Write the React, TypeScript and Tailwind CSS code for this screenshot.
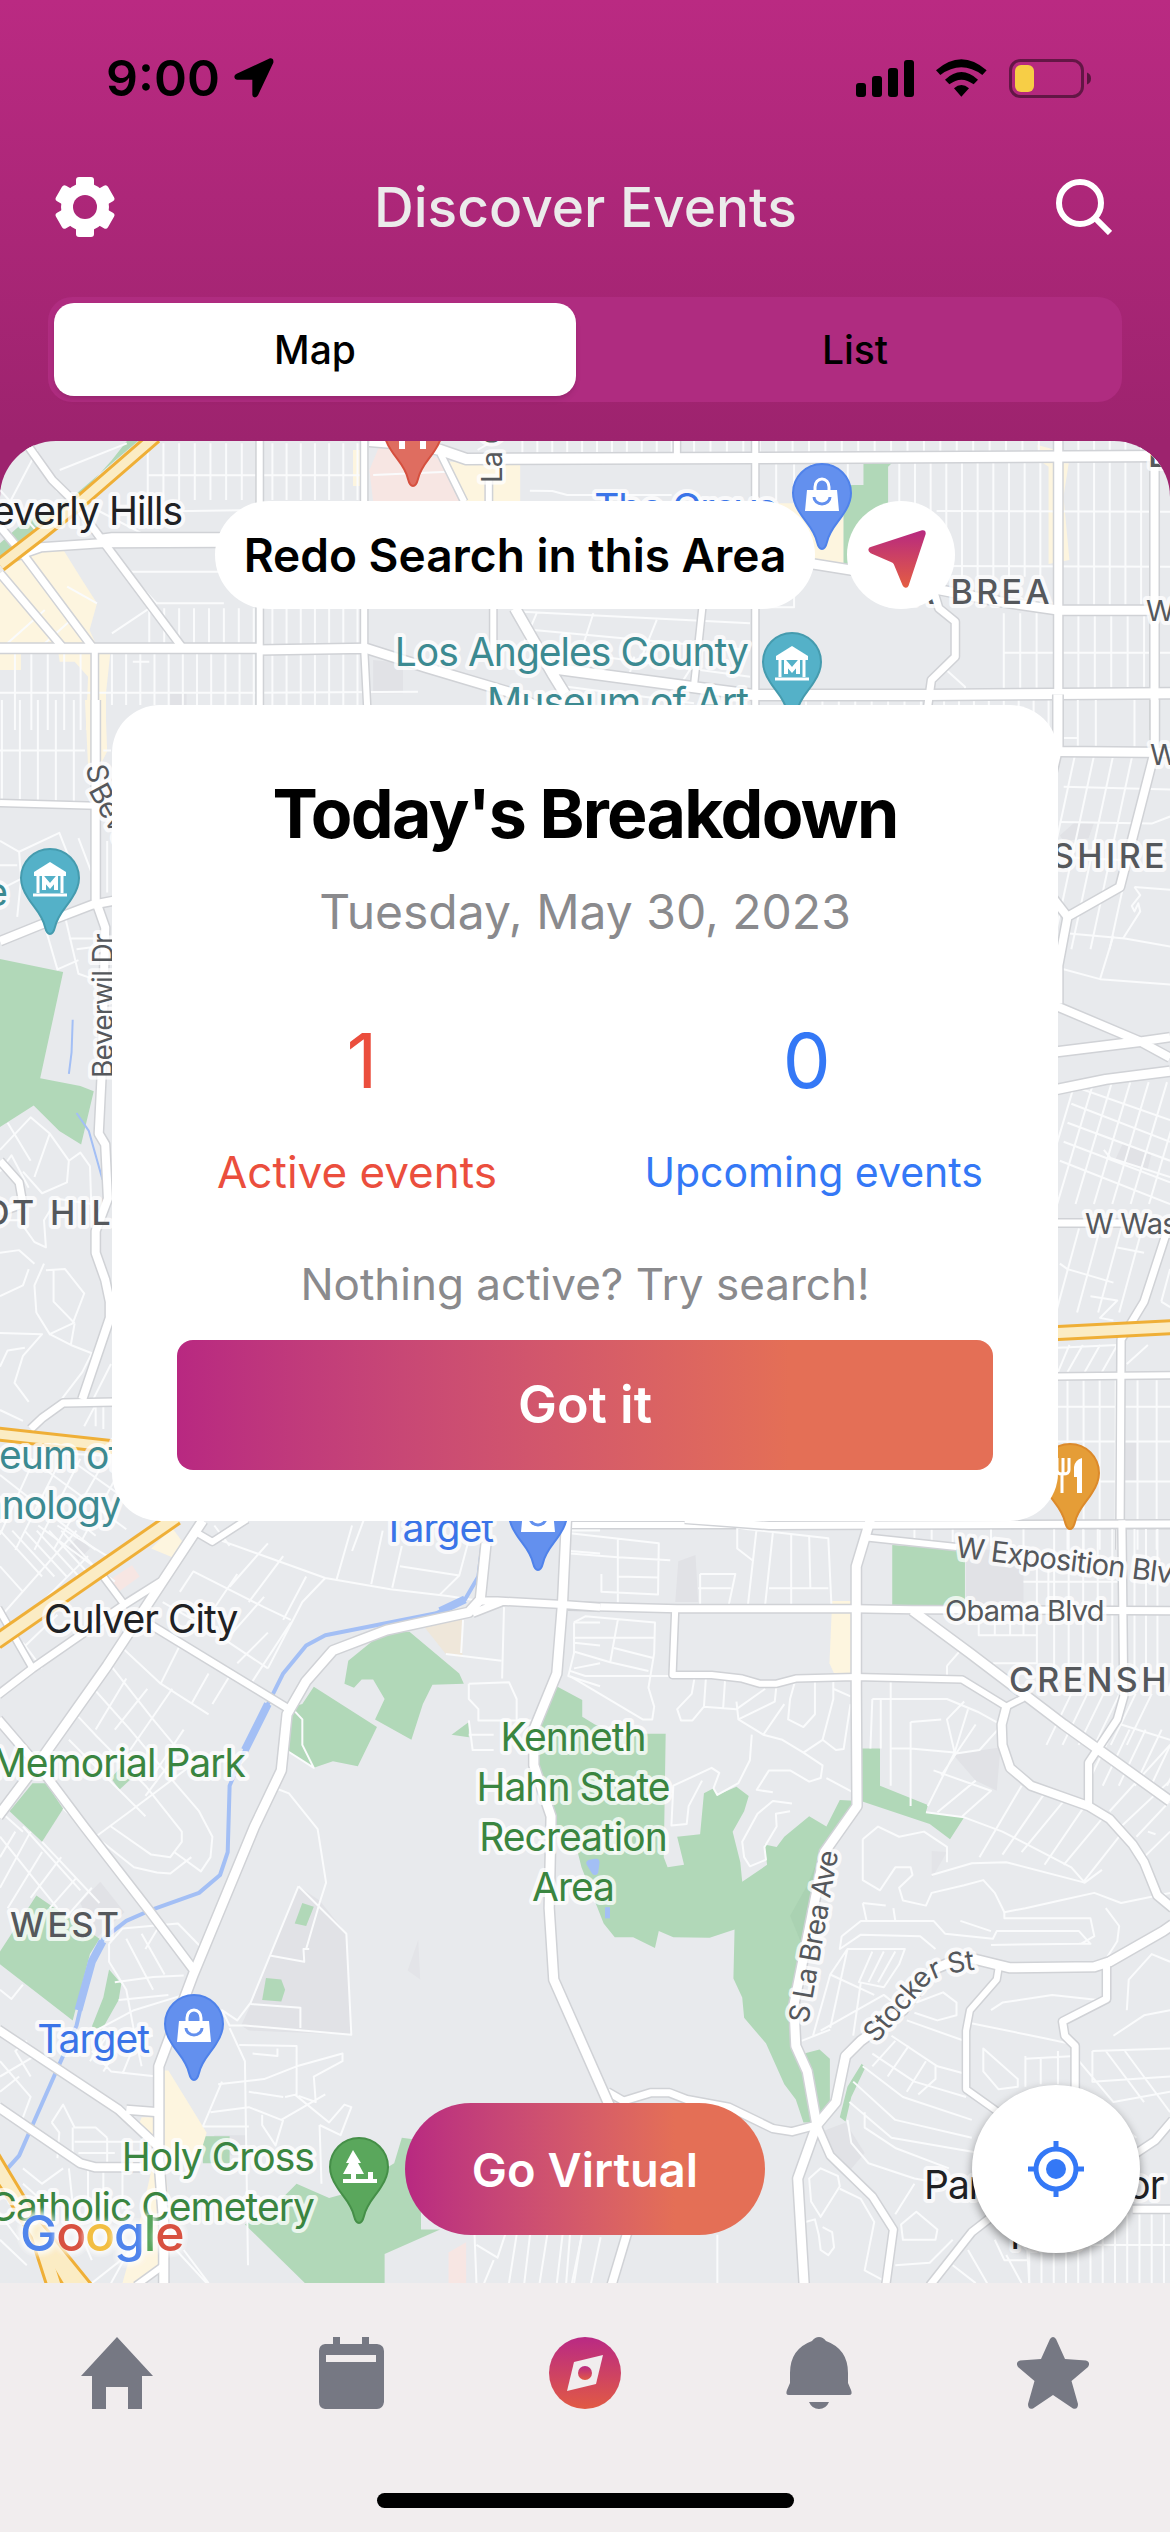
import React, { useState } from "react";

type Road = { d: string; w: number };

/* One section of the city map, drawn in its own survey grid. */
type Sheet = {
  place: string;
  areas: [string, string][];
  water?: Road[];
  minor: string[];
  roads: Road[];
  highways?: Road[];
};

const vLines = (x0: number, x1: number, step: number, y0: number, y1: number) => {
  let d = "";
  for (let x = x0; x <= x1; x += step) d += `M${x} ${y0}V${y1}`;
  return d;
};

const slanted = (x0: number, x1: number, step: number, y0: number, y1: number, dx: number) => {
  let d = "";
  for (let x = x0; x <= x1; x += step) d += `M${x} ${y0}L${x + dx} ${y1}`;
  return d;
};

const GREEN = "#b1d8b8";
const SAND = "#fdf5df";
const ROSE = "#f7e6e3";
const GREY = "#e1e2e6";

const north: Sheet = {
  place: "translate(0 430) scale(0.7463 0.3333)",
  areas: [
    [GREEN, "M185 33L95 205L60 280L0 390V340L30 280L110 190L150 90L170 33Z"],
    [GREEN, "M1157 95H1197L1190 110V240L1130 420V165H1157Z"],
    [SAND, "M0 430L40 360L85 360L110 450L130 520L120 600L130 650L60 655L0 640Z"],
    [SAND, "M0 665H28V720H0Z"],
    [SAND, "M78 665H148L142 790L142 900H115L118 740L100 695H80Z"],
    [ROSE, "M508 50L600 90L622 215H500L495 120Z"],
    [SAND, "M600 95H697V215H625Z"],
    [SAND, "M473 60H486V168H473Z"],
    [SAND, "M1040 220L1130 220V405L1090 395Z"],
    [SAND, "M1390 45L1415 60V100L1432 100L1425 200L1433 390L1405 402L1405 110L1392 90Z"],
    [GREY, "M500 690L540 700V790H500Z"],
    [GREY, "M228 790H250V825H228Z"],
  ],
  minor: [
    vLines(198, 345, 21, 40, 210),
    vLines(365, 480, 19, 40, 210),
    vLines(200, 345, 20, 535, 650),
    vLines(365, 480, 19, 535, 650),
    vLines(20, 120, 22, 665, 900),
    vLines(150, 345, 19, 670, 825),
    vLines(365, 480, 19, 665, 825),
    vLines(700, 900, 20, 33, 75),
    vLines(930, 1410, 22, 33, 72),
    vLines(1040, 1150, 24, 85, 210),
    vLines(1205, 1410, 21, 90, 440),
    vLines(1445, 1540, 21, 33, 530),
    vLines(1345, 1410, 22, 550, 780),
    vLines(1445, 1540, 22, 550, 785),
    vLines(1080, 1240, 22, 800, 830),
    vLines(1265, 1410, 20, 800, 900),
    "M198 136H486M190 245L345 240M175 425H300M205 520H300M500 135L600 125M710 182L740 183L760 195H900",
    "M1255 243L1568 245M1255 408L1568 410M1345 668H1568M0 788H345L560 785M178 695H200",
    "M0 180L60 330M50 60L10 230M80 120L170 40M75 180L125 260M130 240L190 310M160 400L210 520L150 610M90 470L130 520M20 470L75 640M60 540L10 640M100 560L50 660",
    "M640 60L655 40M700 545L1005 580M715 600L1005 660M740 660L1005 740M700 650L720 545M780 655L795 550M860 680L880 570M840 760L850 680M910 770L930 700M760 770L750 830M760 770L930 820",
    "M1268 720L1293 770V785M1064 500V532H1015",
  ],
  roads: [
    { d: "M35 40L70 150L95 205L135 325L245 655", w: 7 },
    { d: "M0 290L30 370L125 655M0 430L85 655", w: 7 },
    { d: "M0 395L55 352L135 340L300 338M135 326L150 322H300", w: 8 },
    { d: "M0 655H345M345 660L490 655L570 712L680 785L720 830", w: 9 },
    { d: "M348 33V830M488 33V655L492 830M127 655V900", w: 6 },
    { d: "M495 33L560 45L590 60L625 87L1010 84L1568 78", w: 10 },
    { d: "M590 70L622 215M655 150V215M661 535V660", w: 6 },
    { d: "M690 535L740 730L757 792M740 715L940 775L1010 795H1240L1568 790", w: 10 },
    { d: "M907 33V83M1012 33V830M941 535L930 765", w: 6 },
    { d: "M1090 402L1140 420L1260 480L1340 515L1420 541H1540", w: 9 },
    { d: "M1252 490L1258 535L1280 575V680L1248 750L1243 830", w: 7 },
    { d: "M1418 33V900", w: 8 },
    { d: "M1547 33V900", w: 8 },
  ],
  highways: [{ d: "M208 20L105 220L55 310L0 405", w: 15 }],
};

const west: Sheet = {
  place: "translate(0 700) scale(0.3827 0.542)",
  areas: [
    [SAND, "M222 0H275L280 95L262 120H230Z"],
    [GREEN, "M0 478L165 502L105 698L210 712L245 722L212 820L155 795L88 748L0 788Z"],
  ],
  water: [{ d: "M190 590L187 650L180 690M200 762L232 795L268 885", w: 2 }],
  minor: [
    vLines(5, 200, 47, 0, 190),
    "M0 93H222M290 93H270M0 260L50 280L155 245L180 290V340M50 280L55 330L0 350M55 330L45 400M0 305H45M280 260V355M205 255L240 320",
    "M110 400L150 497L205 480M170 400L205 505L245 515M180 440H250M175 400L235 375M200 460L255 455",
    "M0 830L80 770L130 800L180 850L175 890L110 910L60 870M0 870L30 840L75 900M20 780L80 850M130 800L90 880M180 850L210 835L235 860L240 960",
    "M0 960L50 960L90 1000L120 1010L115 960L150 920L240 930M115 1040L90 1080L95 1130L130 1170L190 1150L220 1095L170 1050L120 1052M140 1050V1110L195 1150",
    "M0 1020L50 1015L90 1040M0 1100L60 1080L75 1050M0 1168L110 1170L60 1210L38 1260L75 1295M0 1230L20 1200L65 1195M150 1300L215 1240L240 1205M185 1190L250 1208M195 1150L185 1190L130 1170",
    "M240 1295L290 1225M220 1340L250 1300V1340M270 1300V1345M0 1310L60 1330M100 1355L170 1390L290 1395",
    "M0 1540L90 1400M40 1568L160 1400M90 1568L210 1400M140 1568L260 1420M200 1568L330 1400M0 1430L250 1568M80 1400L330 1530M180 1400L340 1480",
  ],
  roads: [
    { d: "M0 190L250 195", w: 6 },
    { d: "M250 0V370L275 420L265 700L258 800L275 820L282 920L250 980V1020L275 1070L287 1110V1140L215 1290", w: 8 },
    { d: "M0 445L140 405L240 378L300 370", w: 8 },
    { d: "M0 850L50 890L60 930L0 945", w: 7 },
    { d: "M300 1295L165 1297L110 1325L80 1345", w: 7 },
  ],
  highways: [{ d: "M-10 1354L300 1378", w: 15 }],
};

const east: Sheet = {
  place: "translate(570 700) scale(0.3827 0.542)",
  areas: [
    [GREY, "M1280 250L1320 225H1370L1355 255L1290 260Z"],
    [GREY, "M1445 818L1520 835L1510 865L1425 848Z"],
    [GREY, "M1445 1370H1480V1440H1445Z"],
  ],
  minor: [
    "M1327 0V90M1374 0V90M1475 0V90M1285 70H1327",
    slanted(1320, 1560, 50, 100, 460, -110),
    "M1290 160L1568 165M1280 225L1520 228L1568 215M1290 430L1450 440L1568 455M1280 495L1385 515L1568 525M1475 345L1568 350M1290 290L1440 295",
    "M1475 345L1490 360L1468 380L1475 390L1485 375L1490 390L1445 440M1385 515L1420 435",
    slanted(1320, 1620, 48, 705, 930, -95),
    "M1325 715L1568 775M1310 745L1568 815M1300 780L1568 850M1290 815L1568 890M1280 850L1568 930M1395 830L1412 845L1568 880",
    slanted(1330, 1600, 55, 975, 1130, -60),
    "M1280 1040L1300 1050L1420 1075M1360 1100L1430 1108L1385 1140L1420 1145M1430 1010L1500 1020M1545 1110L1568 1050M1545 1110L1568 1120",
    "M1275 1240L1305 1190M1300 1240L1340 1190M1345 1240L1385 1190M1390 1240L1430 1190M1455 1225L1510 1190M1275 1195L1430 1190",
    vLines(1300, 1430, 42, 1255, 1568),
    vLines(1483, 1560, 50, 1255, 1568),
    "M1270 1304H1437M1270 1368H1568M1270 1442H1568M1437 1304H1568",
  ],
  roads: [
    { d: "M1275 -10V95L1568 97", w: 9 },
    { d: "M1275 95L1240 200", w: 7 },
    { d: "M1528 0V95L1437 345L1300 400L1276 490V560", w: 8 },
    { d: "M1262 365L1300 400", w: 8 },
    { d: "M1262 562L1490 630L1568 622M1490 630L1568 660", w: 8 },
    { d: "M1262 650L1490 630M1262 720L1400 700L1568 685", w: 9 },
    { d: "M1262 965H1568", w: 7 },
    { d: "M1560 980L1500 1110L1470 1145L1440 1180L1437 1568", w: 7 },
    { d: "M1262 1248L1568 1246", w: 6 },
    { d: "M0 1522H1568", w: 6 },
  ],
  highways: [{ d: "M1250 1169L1580 1157", w: 16 }],
};

const southWest: Sheet = {
  place: "translate(0 1500) scale(0.3827 0.5102)",
  areas: [
    [GREY, "M780 757L835 785L905 850L918 1048L650 1040L630 1030L655 990Z"],
    [GREY, "M180 90L205 72L235 95L205 118Z"],
    [GREY, "M210 790L262 748L325 808L250 860Z"],
    [GREY, "M560 1245H645V1285H560Z"],
    ["#e3e4e8", "M1093 862L1098 940L1065 922Z"],
    [GREEN, "M910 315L1000 260L1070 258L1200 340L1212 360L1130 362L1105 400L1075 470L980 430L1005 390L975 352L945 352L925 368L900 360Z"],
    [GREEN, "M820 366L985 445L935 522L870 512L820 525L747 490L750 430L765 405L790 400Z"],
    [GREEN, "M1180 460L1225 435V465Z"],
    [GREEN, "M85 555H120L165 605L110 670L25 610Z"],
    [GREEN, "M290 545L320 520L345 545L312 568Z"],
    [GREEN, "M0 885L95 775L260 860L235 890L190 1020L0 910Z"],
    [GREEN, "M285 920L317 948L310 980L265 1040L240 1032L270 975Z"],
    [GREEN, "M790 790L820 797L800 835L770 830Z"],
    [GREEN, "M695 937L735 940L745 960L735 983L685 980Z"],
    [GREEN, "M530 1247H600V1300H530Z"],
    [GREEN, "M640 1420L715 1385L775 1340L860 1368L900 1360L1030 1300L1050 1250L1100 1255V1430H1150L1005 1478V1535H797Z"],
    [SAND, "M425 1118H440L540 1240L520 1290L430 1300L445 1400L410 1460L420 1500L350 1535H320L370 1400L410 1265L355 1240L370 1210H410Z"],
    [SAND, "M395 95L450 55L485 90L450 112Z"],
    [ROSE, "M290 155L345 128L365 150L310 180Z"],
    ["#efe7da", "M1110 250L1208 232V308L1165 302Z"],
    [ROSE, "M1172 1475L1218 1455V1535H1172Z"],
  ],
  water: [
    { d: "M1260 90L1250 150L1215 195L1140 222L850 265L800 285L740 340L700 400L640 490L600 560L595 690L575 735L520 770L390 805L330 825L270 860L240 900L200 1030L85 1225L50 1285L20 1310", w: 4 },
    { d: "M1215 195L1150 218M700 400L640 490M268 865L240 905L205 1000", w: 8 },
  ],
  minor: [
    slanted(0, 190, 32, 60, 150, 110),
    "M0 230L200 60M30 260L230 110M60 290L150 225M100 50L300 160M150 50L280 110M200 40L250 70M0 130L60 180M110 330L60 280",
    "M470 180L505 140L690 210L760 235M425 200L540 250L700 330M530 245L620 145M590 275L690 190M660 355L760 240M580 80L850 153L1020 175L1170 188L1255 198M880 155L920 50M1025 172L1050 90M850 153L790 200L700 330M560 50L600 90M600 170L700 85M650 200L740 110M740 235L800 150M620 320L700 260",
    "M1045 130L1200 148L1235 50M950 40L920 100M970 165L1000 60M1150 185L1200 148M1165 302L1310 315M1205 300L1210 235M1312 350L1317 210",
    "M245 370L340 450L440 540L520 610L555 660L550 700L525 728L455 690M205 425L255 465L380 560L475 650V670L445 700L395 695L290 640M180 470L260 530L380 620M285 320L400 430L500 520M320 290L420 360L545 420M250 660L340 610L500 520M380 580L460 500M300 450L385 370M250 450L330 350M340 490L450 370M400 540L480 450M420 360L470 285M500 400L545 340M555 400L600 345",
    "M110 670L260 790M60 640L210 765M165 605L250 660L350 720L410 730L445 732L500 700M0 700L40 650M0 760L80 650M20 800L110 690M80 780L160 700M130 800L200 740M170 820L240 760M0 660L150 800M0 610L60 650",
    "M285 870L320 840L465 830L530 880M285 870V905L330 960L350 1040L370 1110M300 945L400 935L480 932M310 980L440 970M240 1080L290 1120L410 1130M250 1040L350 1000L480 970M330 860L400 960M370 850L430 930M420 830L380 880M235 1100L280 1050L400 1050M270 1120L320 1060M320 1125L350 1070",
    "M0 960L30 978L60 950M0 1100L80 1170L50 1230M0 1130L90 1090M0 1160L50 1130M80 1130L40 1080L70 1060",
    "M720 565L755 575L830 645L852 750L835 790L800 880M780 757L905 850L918 1048L640 1030L600 1030L580 1000L620 1020L655 985L780 757M705 893L795 905L793 880H808M655 988L785 995V1035M600 1035L640 1100L648 1500",
    "M765 410L790 430V480L820 525L747 490M1225 360L1330 357L1350 390V430M1225 360V390L1250 410V432H1390M1225 432L1235 490H1290M1225 460H1290",
    "M625 1068L775 1070V1165L745 1170M570 1145L690 1135L775 1110L895 1085V1100L820 1130L825 1180L780 1168M530 1228H650M550 1200L650 1190L735 1215L850 1165M685 1205V1225L720 1265L740 1215M770 1165L860 1220L900 1185L918 1190L890 1245L835 1225M835 1225L840 1340M580 1140L530 1228M650 1160L740 1170M725 1075V1090L660 1085",
    "M135 1220L165 1185L195 1230H250L280 1250M135 1220L155 1240L150 1290M190 1230V1290M195 1258H370M280 1250V1300M205 1280H300M60 1310L110 1340L165 1310M60 1340L150 1400M0 1400L50 1450M270 1310V1380M320 1310V1390M230 1308V1380M180 1310L190 1380M0 1450L70 1500M240 1535L400 1440L480 1390M460 1470L540 1535M480 1470L545 1535M200 1420L240 1490M290 1535L360 1440",
    "M1490 60H1568M1490 100L1568 105M1500 240H1568M1500 240V300L1485 345L1568 365M1500 280L1568 285M1500 330L1568 320",
    "M1240 1440L1245 1535M1245 1460L1300 1485L1320 1440M1265 1535L1290 1490M1330 1535L1350 1440M1370 1535L1385 1440M1410 1535L1430 1440M1455 1535L1470 1440M1500 1535L1520 1440",
  ],
  roads: [
    { d: "M530 40L420 165L280 325L115 500L-5 620", w: 9 },
    { d: "M505 60L555 82L645 38", w: 6 },
    { d: "M420 160L325 205L85 330L-5 382", w: 7 },
    { d: "M270 150L325 205M-5 212L85 330", w: 6 },
    { d: "M390 243L760 412", w: 7 },
    { d: "M-5 430L115 535L220 640L390 805L510 925", w: 8 },
    { d: "M1270 85L1255 195L1225 220L1010 255L870 295L800 355L750 420L735 530L665 640L505 930L415 1110V1290L428 1420V1535", w: 9 },
    { d: "M1255 198H1300L1470 205L1568 210M1235 222L1310 200", w: 7 },
    { d: "M1480 40L1470 200L1455 340L1395 450V520L1440 620L1435 800L1447 940L1600 1200", w: 9 },
    { d: "M-5 1038L310 1195L410 1265M330 1195L415 1200", w: 8 },
    { d: "M-5 1190L210 1300L250 1308H370", w: 8 },
    { d: "M428 1500L355 1540", w: 6 },
  ],
  highways: [
    { d: "M-10 278L460 34", w: 17 },
    { d: "M-20 1290L100 1440L145 1545", w: 18 },
    { d: "M-10 1312L90 1420L190 1545M90 1420L225 1545", w: 16 },
  ],
};

const southEast: Sheet = {
  place: "translate(570 1500) scale(0.3827 0.5102)",
  areas: [
    [GREY, "M283 120L328 108L335 200H275Z"],
    [GREY, "M1035 95L1150 100L1185 130V208H1035Z"],
    [GREY, "M1000 498L1125 485L1115 570L1060 550Z"],
    [GREY, "M650 1240L720 1220L770 1280L730 1315L690 1290Z"],
    ["#e3e4e8", "M945 688L985 690L945 742Z"],
    [SAND, "M685 198H742V340H690L678 320Z"],
    [GREEN, "M842 88L1032 98V210H842Z"],
    [GREEN, "M762 487H810V560L935 598L930 612L1030 622L993 665L940 635L760 590Z"],
    [GREEN, "M-35 365L32 392V425L65 440L120 458H250L245 700L255 720L298 715L280 660L340 655L350 575L375 565L385 578L435 562L467 580L455 610L425 650L445 710L450 748L515 715L508 675L540 680L560 660L625 620L670 640L705 588L755 590L665 690L640 800L585 1000L595 1080L630 1130L645 1220H610L590 1175L560 1145L512 1065L455 1015L450 975L427 938L430 842L365 858L270 857L232 845L222 878L165 857H117L88 830L30 720L20 690L-40 640L-50 600L-95 500L-90 440Z"],
    ["#aad2b2", "M575 815L620 755L650 700L640 800L605 870Z"],
    [GREEN, "M612 1085L652 1077L679 1095V1185L650 1215Z"],
    [GREEN, "M762 1105L772 1112L735 1170L720 1218L705 1210L725 1150Z"],
  ],
  water: [
    { d: "M52 712L68 710L65 728Z", w: 7 },
    { d: "M98 798V820", w: 5 },
  ],
  minor: [
    "M0 65L232 85L230 185L82 180V145M0 105L125 112L262 118M125 75V210M125 150L230 152M340 145H432L415 205M340 145V205M335 173H420",
    "M437 55L675 75L683 205M437 55V95L480 120M487 60L465 205M530 65L510 205M578 68V205M625 72L628 172M520 173H675",
    "M10 240L40 228L222 240L220 300L205 368L220 405L215 430L190 430L100 390L0 345M10 270H220M10 297L105 318L205 335M0 335L40 345H260M105 318L125 235M115 290L220 310",
    "M325 350L318 380L280 410L290 432H320L350 405L355 350M350 405L435 410L510 370M405 355L400 410M435 395L440 430L505 460L555 470L610 495L660 520L655 545L625 552L575 530H520L488 568L530 573M475 460L470 510L440 555L385 578L375 565L390 535L370 525L270 560L265 638L305 635L310 600L345 550",
    "M540 360L535 395L440 430M590 350L575 390L570 430L610 445L640 420V350M688 350V390L660 470L695 490L715 488L733 400M688 370L733 385M505 460L560 400M610 495L660 470M670 545L740 573",
    "M580 595L530 590L490 615L450 670L455 700L470 718L512 705L508 680L540 640L538 615L575 610",
    "M790 390H985L1065 415L1125 440M790 390L785 487M812 390V487M838 355V560M890 435V600M890 435L970 430M838 487H890L1005 495L985 430L1030 395M935 600L1005 495M970 540L1060 440M950 530L1100 570L1025 620M1000 498L1070 490L1130 440M1005 495L1040 410M960 612L1060 550M985 325L1020 295M985 325V345",
    "M930 612L1030 622L1130 650L1310 720L1345 750L1390 725M1070 700L1180 560M1130 695L1240 575M1180 690L1290 590M1240 715L1340 605M1290 715L1390 625M1340 750L1440 655",
    "M765 665L805 640L860 660L925 650L985 680V710M765 665V745L810 765L850 720H890L895 735L860 760L870 785L930 795L945 770L1030 755L1080 745L1110 770L1135 808L1190 800L1280 785L1370 770L1440 790L1568 770M945 735L1050 712L1140 710L1345 750M765 790L825 795M765 790L775 825H850L845 800",
    "M710 855L760 825L950 825L980 850L1105 860L1115 845H1330L1360 870L1330 870M1135 808V820L1360 820L1370 855L1335 870L1100 872M1020 825L1100 845M1400 800L1435 835L1430 865L1400 900M710 855L705 880L760 852L915 855L955 880",
    "M635 1050L680 930L725 880H875L860 910L820 955L755 945L790 885M725 880L680 1035M680 930L795 970M655 1040L820 970L870 1000M760 945L740 1050M820 885L780 945M850 885L805 945M605 1060L680 1038",
    "M1100 1000L1130 985L1260 970L1380 980M1045 1025L1240 1055L1320 1068M905 985L975 965L1010 985V1010L960 1020L900 1005M880 1020L1030 1060M840 1050L960 1110L1035 1125M790 1085L900 1140L1035 1170M765 1110L870 1170L1050 1215M740 1140L850 1215L1050 1250M730 1180L840 1250L1070 1280M770 1200V1230L850 1270L990 1310M725 1215L735 1260L780 1300L900 1330L1050 1350",
    "M850 1400L900 1340M790 1110L850 1060M830 1130L885 1070M880 1160L930 1100M955 1110V1135L910 1165M1080 1075L1170 1135V1150L1120 1155L1080 1120ZM1190 1090V1150M1230 1095V1145M1190 1095L1320 1090M1275 1080V1145",
    "M625 1330L655 1310L700 1325L705 1345L655 1405L630 1375ZM615 1415L640 1410L650 1440L655 1470L675 1480L690 1465L685 1435L660 1425M705 1350L760 1370L795 1415L770 1510L820 1530M865 1420L905 1395L960 1430L955 1450L870 1450ZM850 1500L940 1495L1000 1450",
    "M1220 240V320H1105M1068 225V265H1220M1110 225V265M1150 225V265M1185 225V265M1220 120V210",
    vLines(1265, 1430, 38, 50, 330),
    vLines(1475, 1560, 30, 50, 350),
    "M900 50V75M945 52V80M1000 52V88M1100 50V90M1185 55V125H1440M1250 125V210M1185 160H1440",
    slanted(1310, 1560, 42, 380, 480, -65),
    slanted(1420, 1650, 42, 450, 560, -70),
    "M1410 610L1568 480M1440 640L1568 550M1440 440L1568 470M1480 660L1568 590M1500 700L1568 650M1510 650L1530 655",
    "M1455 1000L1460 940L1520 890L1568 905M1420 1050L1500 1010L1568 1000M1365 1080L1568 1075M1365 1080V1140L1568 1130M1330 1100L1420 1180L1568 1160M1400 1080L1500 1180M1450 1080L1568 1200M1340 1170L1480 1250",
    vLines(1200, 1560, 32, 1400, 1535),
    "M1150 1440L1195 1470L1200 1535M1140 1480L1180 1535M1000 1500L1060 1535M1110 1450L1135 1490H1200M1040 1470L1090 1535M1205 1460H1568",
    "M0 1440L-10 1535M30 1445L5 1535M80 1445L55 1535M385 1440V1535",
  ],
  roads: [
    { d: "M-5 208L280 213L745 213L895 215L1568 217", w: 7 },
    { d: "M275 213L268 343H370L450 350L495 360H540L590 350L745 347L1025 352L1140 405L1185 388", w: 6 },
    { d: "M785 38L748 130V370L750 600L665 690L585 990L590 1070L620 1120L645 1225L595 1330L612 1540", w: 9 },
    { d: "M300 38L520 50L1568 47", w: 7 },
    { d: "M770 73L1010 92", w: 6 },
    { d: "M895 217L1045 300L1290 440L1568 590", w: 9 },
    { d: "M1442 40L1447 385L1430 430L1355 515V600", w: 7 },
    { d: "M1140 405L1128 440L1130 480L1150 525L1205 560L1355 600L1410 625L1470 675L1500 710L1535 775L1575 800", w: 8 },
    { d: "M1575 832L1550 845L1410 905L1370 915L1150 917L1030 895L950 920L870 1000L760 1060L720 1090L695 1180L645 1225", w: 9 },
    { d: "M1120 917L1115 940L1045 1000L1035 1040V1155L1110 1195L1220 1250", w: 6 },
    { d: "M1402 905V978L1287 1022L1293 1050L1320 1070V1160", w: 7 },
    { d: "M98 1160L140 1178L210 1162H260L305 1175L415 1190L530 1232L580 1238L645 1225", w: 7 },
    { d: "M645 1225L680 1285L790 1365L845 1430L825 1540", w: 7 },
    { d: "M1470 1390H1575M1480 1280L1530 1255L1575 1215", w: 7 },
    { d: "M1110 1400L1050 1435L940 1540", w: 7 },
    { d: "M150 1435L108 1540", w: 8 },
  ],
};

const sheets = [north, west, east, southEast, southWest];

function SheetLayer({ sheet }: { sheet: Sheet }) {
  const { place, areas, water = [], minor, roads, highways = [] } = sheet;
  const line = { fill: "none", vectorEffect: "non-scaling-stroke", strokeLinejoin: "round" } as const;
  return (
    <g transform={place}>
      {areas.map(([fill, d]) => (
        <path key={d} fill={fill} d={d} />
      ))}
      {minor.map((d) => (
        <path key={d} d={d} stroke="#fafbfc" strokeWidth={2} {...line} />
      ))}
      {water.map((r) => (
        <path key={r.d} d={r.d} stroke="#a3bff5" strokeWidth={r.w} {...line} />
      ))}
      {roads.map((r) => (
        <path key={r.d} d={r.d} stroke="#d0d2d6" strokeWidth={r.w + 3} {...line} />
      ))}
      {roads.map((r) => (
        <path key={r.d} d={r.d} stroke="#ffffff" strokeWidth={r.w} {...line} />
      ))}
      {highways.map((r) => (
        <path key={r.d} d={r.d} stroke="#efaf37" strokeWidth={r.w} {...line} />
      ))}
      {highways.map((r) => (
        <path key={r.d} d={r.d} stroke="#fbecc4" strokeWidth={r.w - 6} {...line} />
      ))}
    </g>
  );
}

function Pin({ x, y, fill, edge, children }: { x: number; y: number; fill: string; edge: string; children?: React.ReactNode }) {
  return (
    <g transform={`translate(${x} ${y})`}>
      <path
        d="M0 86C-3 86-4 83-5 79C-8 66-16 60-22 50C-26 44-29 37-29 30A29 29 0 0 1 29 30C29 37 26 44 22 50C16 60 8 66 5 79C4 83 3 86 0 86Z"
        fill={fill}
        stroke={edge}
        strokeWidth={2}
      />
      {children}
    </g>
  );
}

const Bag = () => (
  <g>
    <path d="M-15 27H15L17 48H-17Z" fill="#fff" />
    <path d="M-7 27V24A7 8 0 0 1 7 24V27" fill="none" stroke="#fff" strokeWidth={3} />
    <path d="M-8 34A8 7 0 0 0 8 34" fill="none" stroke="#6390ee" strokeWidth={3} />
  </g>
);

const Museum = () => (
  <g fill="none" stroke="#fff">
    <path d="M0 14L16 24V28H-16V24Z" fill="#fff" stroke="none" />
    <path d="M-12 28V45M12 28V45M-17 47H17" strokeWidth={3} />
    <path d="M-6 42V31L0 38L6 31V42" strokeWidth={4} />
  </g>
);

type LabelProps = {
  x?: number;
  y?: number;
  size?: number;
  fill?: string;
  anchor?: "start" | "middle" | "end";
  turn?: number;
  caps?: boolean;
  children: React.ReactNode;
};

function Label({ x = 0, y = 0, size = 39, fill = "#202124", anchor = "start", turn = 0, caps = false, children }: LabelProps) {
  return (
    <text
      transform={`translate(${x} ${y}) rotate(${turn})`}
      fontSize={size}
      fill={fill}
      textAnchor={anchor}
      stroke="#ffffff"
      strokeOpacity={0.75}
      strokeWidth={8}
      strokeLinejoin="round"
      paintOrder="stroke"
      className={caps ? "font-medium tracking-widest" : "tracking-tight"}
    >
      {children}
    </text>
  );
}

const STREET = "#55585c";
const TEAL = "#3c8a91";
const BLUE = "#3a74e8";
const PARK = "#3a8540";

function CityMap() {
  return (
    <svg
      className="absolute inset-0 size-full bg-[#e8eaed]"
      viewBox="0 441 1170 1842"
      preserveAspectRatio="xMidYMid slice"
      aria-label="Map of Los Angeles"
    >
      {sheets.map((s) => (
        <SheetLayer key={s.place} sheet={s} />
      ))}

      <Label x={182} y={525} anchor="end">Beverly Hills</Label>
      <Label x={502} y={483} size={29} turn={-90} fill={STREET}>La Cienega</Label>
      <Label x={777} y={522} anchor="end" fill={BLUE}>The Grove</Label>
      <Label x={1053} y={604} size={34} anchor="end" caps fill={STREET}>LA BREA</Label>
      <Label x={1148} y={467} size={34} caps fill={STREET}>E</Label>
      <Label x={1146} y={621} size={29} fill={STREET}>W 3rd St</Label>
      <Label x={748} y={666} anchor="end" fill={TEAL}>Los Angeles County</Label>
      <Label x={748} y={716} anchor="end" fill={TEAL}>Museum of Art</Label>
      <Label x={86} y={766} size={29} turn={80} fill={STREET}>S</Label>
      <Label x={88} y={790} size={29} turn={62} fill={STREET}>Beverly</Label>
      <Label x={113} y={1078} size={28} turn={-90} fill={STREET}>Beverwil Dr</Label>
      <Label x={7} y={906} anchor="end" fill={TEAL}>Tolerance</Label>
      <Label x={162} y={1225} size={34} anchor="end" caps fill={STREET}>CHEVIOT HILLS</Label>
      <Label x={1168} y={868} size={34} anchor="end" caps fill={STREET}>WILSHIRE</Label>
      <Label x={1150} y={765} size={29} fill={STREET}>W Pico</Label>
      <Label x={1085} y={1234} size={29} fill={STREET}>W Washington Blvd</Label>
      <Label x={122} y={1469} anchor="end" fill={TEAL}>Museum of</Label>
      <Label x={121} y={1519} anchor="end" fill={TEAL}>Technology</Label>
      <Label x={493} y={1542} anchor="end" fill={BLUE}>Target</Label>
      <Label x={44} y={1633}>Culver City</Label>
      <Label x={245} y={1777} anchor="end" fill={PARK}>Memorial Park</Label>
      <Label x={10} y={1937} size={34} caps fill={STREET}>WEST</Label>
      <Label x={149} y={2053} anchor="end" fill={BLUE}>Target</Label>
      <Label x={314} y={2171} anchor="end" fill={PARK}>Holy Cross</Label>
      <Label x={314} y={2221} anchor="end" fill={PARK}>Catholic Cemetery</Label>
      <Label x={573} y={1751} anchor="middle" fill={PARK}>Kenneth</Label>
      <Label x={573} y={1801} anchor="middle" fill={PARK}>Hahn State</Label>
      <Label x={573} y={1851} anchor="middle" fill={PARK}>Recreation</Label>
      <Label x={573} y={1901} anchor="middle" fill={PARK}>Area</Label>
      <Label x={955} y={1557} size={29} turn={7} fill={STREET}>W Exposition Blvd</Label>
      <Label x={945} y={1621} size={29} fill={STREET}>Obama Blvd</Label>
      <Label x={1009} y={1692} size={34} caps fill={STREET}>CRENSHAW</Label>
      <Label x={808} y={2024} size={28} turn={-80} fill={STREET}>S La Brea Ave</Label>
      <path id="stocker" d="M876 2044L928 1984Q940 1970 1010 1967" fill="none" />
      <Label size={28} fill={STREET}>
        <textPath href="#stocker">Stocker St</textPath>
      </Label>
      <Label x={924} y={2199}>Park-Windsor</Label>
      <Label x={1010} y={2249}>Hills</Label>

      <Pin x={413} y={400} fill="#df6d60" edge="#d5503f">
        <path d="M-11 36V49M10 36V49" stroke="#fff" strokeWidth={6} />
      </Pin>
      <Pin x={822} y={463} fill="#6390ee" edge="#4f82ea"><Bag /></Pin>
      <Pin x={792} y={632} fill="#54b1c8" edge="#459bae"><Museum /></Pin>
      <Pin x={50} y={848} fill="#54b1c8" edge="#459bae"><Museum /></Pin>
      <Pin x={1070} y={1443} fill="#e59d37" edge="#dc8a2b">
        <path d="M-13 15V27Q-13 31-8 31V50M-7 15V31M-1 15V27Q-1 31-7 31" fill="none" stroke="#fff" strokeWidth={3} />
        <path d="M12 15V50H7V34H4V24Q5 17 12 15Z" fill="#fff" />
      </Pin>
      <Pin x={538} y={1484} fill="#6390ee" edge="#4f82ea"><Bag /></Pin>
      <Pin x={194} y={1994} fill="#6390ee" edge="#4f82ea"><Bag /></Pin>
      <Pin x={359} y={2137} fill="#5aa75c" edge="#458f48">
        <path d="M-6 13L2 26H-1L5 37H-3V42H9V35H14V42H18V46H-16V42H-8V37H-16L-10 26H-13Z" fill="#fff" />
      </Pin>
    </svg>
  );
}

function StatusBar() {
  return (
    <div className="flex h-[156px] items-center justify-between pl-[106px] pr-[78px] text-black">
      <div className="flex items-center gap-[14px]">
        <span className="text-[50px] font-semibold leading-none">9:00</span>
        <svg className="size-[40px]" viewBox="692 116 120 120">
          <path d="M800 117Q812 116 810 130L764 228Q760 235 753 234Q747 233 747 226V181H702Q694 181 693 172Q693 166 700 163Z" />
        </svg>
      </div>
      <div className="flex items-center gap-[22px]">
        <svg className="h-[38px] w-[58px]" viewBox="0 0 58 38">
          <rect y="24" width="10" height="14" rx="3" />
          <rect x="16" y="17" width="10" height="21" rx="3" />
          <rect x="32" y="9" width="10" height="29" rx="3" />
          <rect x="48" y="1" width="10" height="37" rx="3" />
        </svg>
        <svg className="h-[38px] w-[51px]" viewBox="348 116 153 114">
          <path d="M348 150Q424 84 500 150L487 164Q424 118 361 164ZM375 178Q424 132 474 178L461 192Q424 164 388 192ZM402 204Q424 184 447 204L424 229Z" />
        </svg>
        <svg className="h-[39px] w-[83px]" viewBox="0 0 83 39">
          <rect x="1.5" y="1.5" width="72" height="36" rx="10" fill="none" stroke="#000" strokeOpacity="0.45" strokeWidth="3" />
          <path d="M78 13.500Q82 15 82 19.500T78 25.500Z" fillOpacity="0.5" />
          <rect x="6" y="6" width="19" height="27" rx="6" fill="#f7ce46" />
        </svg>
      </div>
    </div>
  );
}

const GearIcon = () => (
  <svg className="size-[60px]" viewBox="-30 -30 60 60">
    <mask id="gear-hole">
      <rect x="-30" y="-30" width="60" height="60" fill="#fff" />
      <circle r="12" fill="#000" />
    </mask>
    <g fill="#fff" mask="url(#gear-hole)">
      <circle r="24" />
      {[0, 60, 120].map((a) => (
        <rect key={a} x="-9" y="-30" width="18" height="60" rx="3" transform={`rotate(${a})`} />
      ))}
    </g>
  </svg>
);

const SearchIcon = () => (
  <svg className="size-[56px]" viewBox="0 0 56 56" fill="none" stroke="#fff">
    <circle cx="24" cy="24" r="21" strokeWidth="6" />
    <path d="M38 38L54 54" strokeWidth="6" />
  </svg>
);

const tabs = [
  {
    name: "Home",
    icon: <path d="M36 0L72 39H61V72H47V50H25V72H11V39H0Z" />,
  },
  {
    name: "Calendar",
    icon: (
      <path
        fillRule="evenodd"
        d="M18 0H25V7H47V0H54V7H62Q69 8 69 14V65Q68 72 62 72H10Q4 71 4 65V14Q4 8 10 7H18ZM11 18V25H61V18Z"
      />
    ),
  },
  {
    name: "Discover",
    icon: (
      <g>
        <linearGradient id="compass" x2="0" y2="1">
          <stop stopColor="#b92984" />
          <stop offset="1" stopColor="#e15a44" />
        </linearGradient>
        <circle cx="36" cy="36" r="36" fill="url(#compass)" />
        <path d="M54 18L47 47L18 54L25 25Z" fill="#f1edee" />
        <circle cx="36" cy="36" r="7" fill="url(#compass)" />
      </g>
    ),
  },
  {
    name: "Notifications",
    icon: (
      <path d="M36 0Q40 0 43 4Q65 12 65 36V46L68 53Q70 58 66 58H6Q2 58 4 53L7 46V36Q7 12 29 4Q32 0 36 0ZM26 65H46Q43 72 36 72T26 65Z" />
    ),
  },
  {
    name: "Favorites",
    icon: (
      <path d="M33 2Q36-2 39 2L48 22L69 23.500Q74 25 71 30L54.500 44L61 67Q61 73 56 71.500L36 58L16 71.500Q11 73 11 67L17.500 44L1 30Q-2 25 3 23.500L24 22Z" />
    ),
  },
];

const logo = [
  ["G", "text-[#5085ec]"],
  ["o", "text-[#d85140]"],
  ["o", "text-[#f2be42]"],
  ["g", "text-[#5085ec]"],
  ["l", "text-[#58a55c]"],
  ["e", "text-[#d85140]"],
];

export default function App() {
  const [view, setView] = useState("Map");
  return (
    <div className="flex min-h-screen flex-col bg-[#9d236e] font-['Inter',sans-serif]">
      <header className="bg-linear-to-b from-[#ba2a82] to-[#9d236e] pb-[39px]">
        <StatusBar />
        <div className="flex h-[102px] items-center justify-between pl-[55px] pr-[58px]">
          <button aria-label="Settings"><GearIcon /></button>
          <h1 className="text-[55px] font-medium leading-none text-[#ebebeb]">Discover Events</h1>
          <button aria-label="Search"><SearchIcon /></button>
        </div>
        <div role="tablist" className="mx-[48px] mt-[39px] grid h-[105px] grid-cols-2 gap-[18px] rounded-3xl bg-[#af2c80] p-[6px]">
          {["Map", "List"].map((name) => (
            <button
              key={name}
              role="tab"
              aria-selected={view === name}
              onClick={() => setView(name)}
              className="rounded-[20px] text-[39px] font-medium leading-none text-black aria-selected:bg-white aria-selected:shadow-md"
            >
              {name}
            </button>
          ))}
        </div>
      </header>

      <main className="relative flex flex-1 flex-col overflow-hidden rounded-t-[56px]">
        <CityMap />

        <div className="relative mt-[60px] flex justify-center gap-[32px]">
          <button className="h-[108px] w-[600px] rounded-full bg-white text-[46px] font-semibold leading-none text-black">
            Redo Search in this Area
          </button>
          <button aria-label="Center on me" className="flex size-[108px] items-center justify-center rounded-full bg-white pr-2 pt-2">
            <svg className="size-[58px]" viewBox="383 245 173 173">
              <linearGradient id="arrow" x2="0" y2="1">
                <stop stopColor="#b72980" />
                <stop offset="1" stopColor="#e45d42" />
              </linearGradient>
              <path
                fill="url(#arrow)"
                d="M544 246Q556 244 555 257L504 411Q501 418 495 417Q489 417 486 410L460 347Q458 343 453 341L391 314Q384 310 384 304Q385 297 391 296Z"
              />
            </svg>
          </button>
        </div>

        <section className="relative mx-[112px] mt-[96px] rounded-[48px] bg-white px-[65px] pb-[51px] pt-[66px] text-center">
          <h2 className="text-[68px] font-bold leading-[84px] tracking-tight text-black">Today's Breakdown</h2>
          <p className="mt-[27px] text-[48px] leading-[60px] text-[#8a8a8d]">Tuesday, May 30, 2023</p>
          <div className="mt-[72px] flex justify-between pl-[40px] pr-[10px]">
            <div className="text-[#eb4e3d]">
              <p className="pl-[10px] text-[76px] leading-[92px]">1</p>
              <p className="mt-[40px] text-[44px] leading-[52px]">Active events</p>
            </div>
            <div className="text-[#3478f6]">
              <p className="pr-[14px] text-[76px] leading-[92px]">0</p>
              <p className="mt-[40px] text-[41px] leading-[52px]">Upcoming events</p>
            </div>
          </div>
          <p className="mt-[60px] text-[44px] leading-[52px] text-[#8a8a8d]">Nothing active? Try search!</p>
          <button className="mt-[30px] block h-[130px] w-full rounded-[16px] bg-linear-to-r from-[#b82881] to-[#e46f56] to-75% text-[52px] font-semibold leading-none text-white">
            Got it
          </button>
        </section>

        <div className="relative mt-auto grid grid-cols-[1fr_auto_1fr] items-center px-[20px] pb-[30px]">
          <div className="-mb-2 self-end text-[50px] font-medium leading-[56px] tracking-tight [text-shadow:0_0_8px_#fff,0_0_8px_#fff,0_0_8px_#fff]">
            {logo.map(([letter, color], i) => (
              <span key={i} className={color}>{letter}</span>
            ))}
          </div>
          <button className="h-[132px] w-[360px] rounded-full bg-linear-to-r from-[#b82881] to-[#e46f56] to-75% text-[47px] font-semibold leading-none text-white">
            Go Virtual
          </button>
          <button
            aria-label="My location"
            className="mr-[10px] flex size-[168px] items-center justify-center justify-self-end rounded-full bg-white shadow-[0_4px_10px_rgba(0,0,0,0.4)]"
          >
            <svg className="size-[56px]" viewBox="-28 -28 56 56" fill="none" stroke="#3478f6" strokeWidth="5">
              <circle r="20" />
              <circle r="10" fill="#3478f6" stroke="none" />
              <path d="M0-28V-20M0 28V20M-28 0H-20M28 0H20" />
            </svg>
          </button>
        </div>
      </main>

      <nav className="bg-[#f1edee] pb-[24px] pt-[54px]">
        <div className="grid grid-cols-5">
          {tabs.map((tab) => (
            <button key={tab.name} aria-label={tab.name} className="flex justify-center">
              <svg className="size-[72px]" viewBox="0 0 72 72" fill="#767883">{tab.icon}</svg>
            </button>
          ))}
        </div>
        <div className="mx-auto mt-[84px] h-[15px] w-[417px] rounded-full bg-black" />
      </nav>
    </div>
  );
}
